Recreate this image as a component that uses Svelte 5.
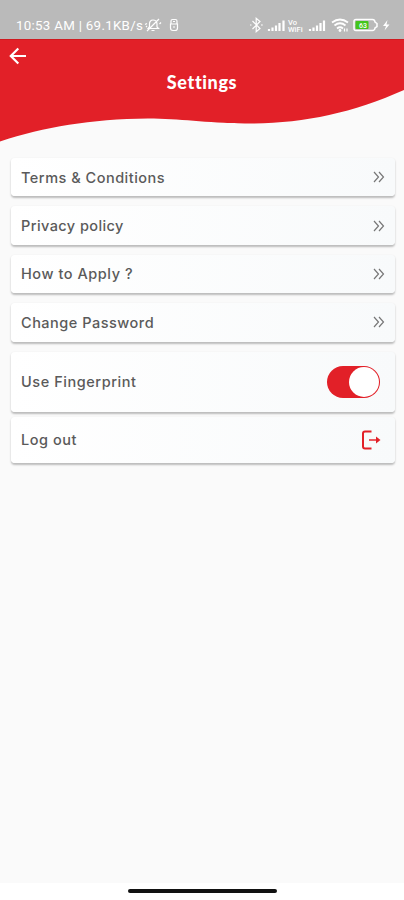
<script>
  const links = [
    { label: "Terms & Conditions", spacing: 0.5 },
    { label: "Privacy policy", spacing: 0.42 },
    { label: "How to Apply ?", spacing: 0.55 },
    { label: "Change Password", spacing: 0.5 },
  ];

  let fingerprint = true;

  function toggleFingerprint() {
    fingerprint = !fingerprint;
  }
</script>

<div class="screen">
  <div class="statusbar">
    <span class="clock">10:53 AM | 69.1KB/s</span>
    <svg class="mute" width="18" height="16" viewBox="0 0 18 16">
      <path d="M4 11.5L5.5 9.5V7C5.5 4.5 7 3 9 3s4 1.500 4 4v3l1.500 1.500zM7.500 13.500h3M3 14L15 2M1 7.500l2-1M15.500 7l1.500-1.500M2 10l1-1" />
    </svg>
    <svg class="usb" width="10" height="16" viewBox="0 0 10 16">
      <path d="M2 7V4q0-1.500 1.500-1.500h3Q8 2.500 8 4v3M1.500 7h7v4q0 2.500-2.500 2.500H4Q1.500 13.500 1.500 11zM4 4.500h2M4 10h2" />
    </svg>
    <svg class="system" width="144" height="18" viewBox="0 0 144 18">
      <path class="line" d="M3.500 5l7.500 7.500L7.200 15.800V2.200L11 5.500l-7.500 7.500M1 9h1.500M12 9h1.800" />
      <path class="bars" d="M20 15v-2M23.500 15v-3.500M27 15V9.500M30.500 15V7M34.500 15V4.500M61 15v-2M64.500 15v-3.500M68 15V9.500M71.500 15V7M75 15V4.500" />
      <text x="39" y="8.500">Vo</text>
      <text x="39" y="16">WiFi</text>
      <path class="wifi" d="M83 6.500Q91 .5 99 6.500M85.500 9.500q5.500-4.500 11 0M88 12.500q3-2.500 6 0" />
      <circle cx="91" cy="14.500" r="1.400" />
      <path class="line" d="M95.500 12.500v3M98 12.500v3" />
      <path class="battery" d="M107 3.500h16.500q2.200 0 2.500 2.500l2 1.500v3L126 12q-.3 2.500-2.500 2.500H107q-2 0-2-2v-7q0-2 2-2z" />
      <rect class="charge" x="106.500" y="5" width="13" height="8" rx="1" />
      <text class="percent" x="110" y="11.800">63</text>
      <path class="bolt" d="M138.500 4l-4.500 6h3l-1.500 4.500 5-6h-3z" />
    </svg>
  </div>

  <header>
    <svg class="wave" width="404" height="103" viewBox="0 0 404 103" preserveAspectRatio="none">
      <path d="M0 0H404V51C350 75 300 85 245 84.500C205 84 180 79.500 148 79.500C90 80 45 88 0 102.500Z" />
      <path class="edge" d="M0 .5H404" />
    </svg>
    <button class="back" type="button" aria-label="Back">
      <svg width="18" height="18" viewBox="0 0 18 18">
        <path d="M17 9H2M9.300 1.500L1.800 9l7.500 7.500" />
      </svg>
    </button>
    <h1>Settings</h1>
  </header>

  <main>
    {#each links as link}
      <div class="card">
        <span style="letter-spacing: {link.spacing}px">{link.label}</span>
        <svg class="chevrons" width="12" height="12" viewBox="0 0 12 12">
          <path d="M1 1l4.500 5L1 11M6 1l4.500 5L6 11" />
        </svg>
      </div>
    {/each}
    <div class="card tall">
      <span>Use Fingerprint</span>
      <button
        class="switch"
        class:on={fingerprint}
        type="button"
        role="switch"
        aria-checked={fingerprint}
        aria-label="Use Fingerprint"
        on:click={toggleFingerprint}
      >
        <i></i>
      </button>
    </div>
    <div class="card logout">
      <span>Log out</span>
      <svg width="20" height="20" viewBox="0 0 20 20">
        <path class="door" d="M10.500 1.500H4Q2 1.500 2 3.500v13q0 2 2 2h6.500" />
        <path class="arrow" d="M8 10h8" />
        <path class="head" d="M15 6.500l4.500 3.500-4.500 3.500z" />
      </svg>
    </div>
  </main>

  <footer><div class="handle"></div></footer>
</div>

<style>
  :global(body) {
    margin: 0;
  }

  .screen {
    display: flex;
    flex-direction: column;
    width: 404px;
    height: 900px;
    background: #fafafa;
    font-family: Inter, "Open Sans", sans-serif;
    overflow: hidden;
  }

  button {
    border: none;
    padding: 0;
    background: none;
    cursor: pointer;
  }

  svg {
    display: block;
    flex: none;
  }

  .statusbar {
    display: flex;
    align-items: center;
    flex: none;
    box-sizing: border-box;
    height: 39px;
    padding: 11px 11px 0 16px;
    background: #bababa;
    color: #fff;
  }

  .clock {
    width: 128px;
    font: 400 13.3px Roboto, sans-serif;
    letter-spacing: 0.3px;
    white-space: nowrap;
  }

  .statusbar svg {
    fill: none;
    stroke: #fff;
    stroke-width: 1.2;
  }

  .usb {
    margin-left: 7px;
  }

  .statusbar .system {
    margin-left: auto;
  }

  .system .bars {
    stroke-width: 2.2;
  }

  .system .wifi {
    stroke-width: 1.8;
  }

  .system circle,
  .system .bolt {
    fill: #fff;
    stroke: none;
  }

  .system text {
    fill: #fff;
    stroke: none;
    font: 500 7.5px Roboto, sans-serif;
  }

  .system .battery {
    stroke-width: 1.5;
  }

  .system .charge {
    fill: #43c51d;
    stroke: none;
  }

  .system .percent {
    font-size: 7px;
  }

  header {
    position: relative;
    flex: none;
    height: 119px;
  }

  .wave {
    position: absolute;
    top: 0;
    left: 0;
    fill: #e22028;
  }

  .wave .edge {
    stroke: #cf1b20;
  }

  .back {
    position: relative;
    display: block;
    margin: 0;
    padding: 8px 9px 0;
  }

  .back path {
    fill: none;
    stroke: #fff;
    stroke-width: 2.2;
  }

  h1 {
    position: relative;
    margin: 5px 0 0;
    color: #fff;
    font: 900 18px/24px Lato, sans-serif;
    letter-spacing: 0.6px;
    text-align: center;
  }

  main {
    display: flex;
    flex-direction: column;
    flex: 1;
    padding: 0 9.500px 0 10.500px;
  }

  .card {
    display: flex;
    align-items: center;
    justify-content: space-between;
    box-sizing: border-box;
    height: 38.400px;
    margin-bottom: 10px;
    padding: 0 10px 0 10.500px;
    border-radius: 4px;
    background: linear-gradient(90deg, #fff, #f8fafb);
    box-shadow: 0 1.500px 2px rgba(0, 0, 0, 0.25);
    color: #5a5a5a;
    font-size: 14.500px;
    font-weight: 500;
    letter-spacing: 0.55px;
  }

  .card.tall {
    height: 60.400px;
    margin-bottom: 5px;
    padding-right: 14.500px;
  }

  .card.logout {
    height: 46px;
    padding-right: 13.500px;
  }

  .chevrons path {
    fill: none;
    stroke: #777;
    stroke-width: 1.2;
  }

  .switch {
    box-sizing: border-box;
    display: flex;
    width: 53px;
    height: 32px;
    padding: 1px;
    border-radius: 16px;
    background: #bbb;
  }

  .switch.on {
    justify-content: flex-end;
    background: #e22028;
  }

  .switch i {
    width: 30px;
    height: 30px;
    border-radius: 50%;
    background: #fff;
  }

  .logout .door,
  .logout .arrow {
    fill: none;
    stroke: #e22028;
    stroke-width: 2;
  }

  .logout .arrow {
    stroke: #ea5a60;
  }

  .logout .head {
    fill: #e22028;
  }

  footer {
    flex: none;
    height: 17px;
    padding-top: 6px;
    box-sizing: border-box;
    background: #fff;
  }

  .handle {
    width: 149px;
    height: 4px;
    margin: 0 auto;
    border-radius: 2px;
    background: #111;
  }
</style>
